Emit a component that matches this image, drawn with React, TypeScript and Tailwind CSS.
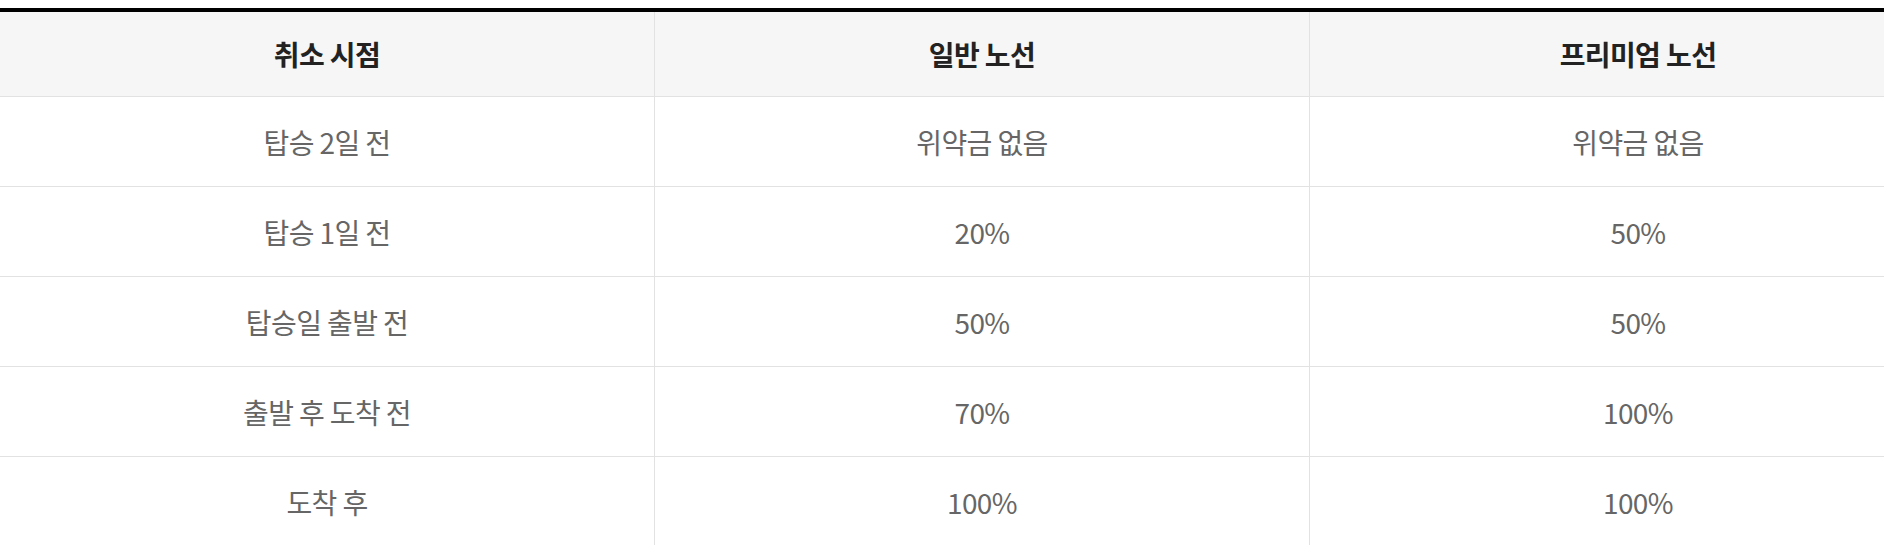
import React from "react";

type Row = { when: string; normal: string; premium: string };

const rows: Row[] = [
  { when: "탑승 2일 전", normal: "위약금 없음", premium: "위약금 없음" },
  { when: "탑승 1일 전", normal: "20%", premium: "50%" },
  { when: "탑승일 출발 전", normal: "50%", premium: "50%" },
  { when: "출발 후 도착 전", normal: "70%", premium: "100%" },
  { when: "도착 후", normal: "100%", premium: "100%" },
];

const font = { fontFamily: '"Noto Sans CJK KR", "Noto Sans", sans-serif' };

function HeadCell({ children, last }: { children: React.ReactNode; last?: boolean }) {
  return (
    <div
      className={
        "flex h-[85px] items-center justify-center bg-[#f6f6f6] text-[28px] font-bold tracking-[-0.6px] text-[#222] border-b border-[#e2e2e2] " +
        (last ? "" : "border-r")
      }
    >
      {children}
    </div>
  );
}

function BodyCell({ children, last }: { children: React.ReactNode; last?: boolean }) {
  return (
    <div
      className={
        "flex h-[90px] items-center justify-center bg-white text-[28px] tracking-[-0.6px] text-[#666] border-b border-[#e2e2e2] " +
        (last ? "" : "border-r")
      }
    >
      {children}
    </div>
  );
}

export default function App() {
  return (
    <div className="h-[545px] w-[1884px] overflow-hidden bg-white" style={font}>
      <div className="mt-[8px] w-[1966px] border-t-[4px] border-black">
        <div className="grid grid-cols-[655px_655px_656px]">
          <HeadCell>취소 시점</HeadCell>
          <HeadCell>일반 노선</HeadCell>
          <HeadCell last>프리미엄 노선</HeadCell>
          {rows.map((r) => (
            <React.Fragment key={r.when}>
              <BodyCell>{r.when}</BodyCell>
              <BodyCell>{r.normal}</BodyCell>
              <BodyCell last>{r.premium}</BodyCell>
            </React.Fragment>
          ))}
        </div>
      </div>
    </div>
  );
}
